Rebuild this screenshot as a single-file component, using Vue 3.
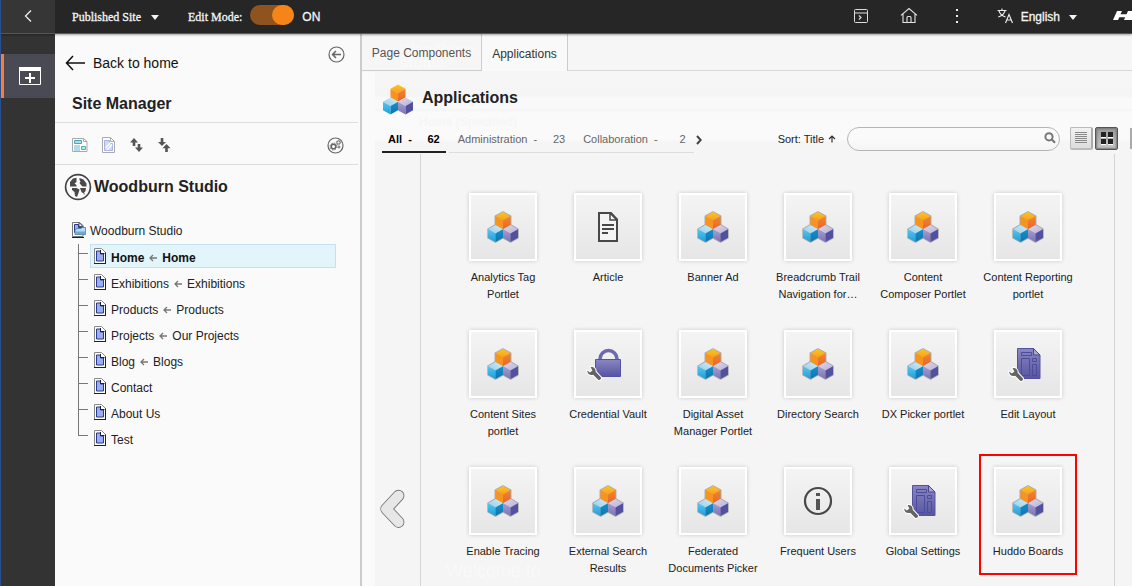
<script setup>
const pages = [
  { name: 'Home', target: 'Home', active: true },
  { name: 'Exhibitions', target: 'Exhibitions' },
  { name: 'Products', target: 'Products' },
  { name: 'Projects', target: 'Our Projects' },
  { name: 'Blog', target: 'Blogs' },
  { name: 'Contact' },
  { name: 'About Us' },
  { name: 'Test' },
]

const apps = [
  { lines: ['Analytics Tag', 'Portlet'], icon: 'cubes' },
  { lines: ['Article'], icon: 'article' },
  { lines: ['Banner Ad'], icon: 'cubes' },
  { lines: ['Breadcrumb Trail', 'Navigation for…'], icon: 'cubes' },
  { lines: ['Content', 'Composer Portlet'], icon: 'cubes' },
  { lines: ['Content Reporting', 'portlet'], icon: 'cubes' },
  { lines: ['Content Sites', 'portlet'], icon: 'cubes' },
  { lines: ['Credential Vault'], icon: 'lock' },
  { lines: ['Digital Asset', 'Manager Portlet'], icon: 'cubes' },
  { lines: ['Directory Search'], icon: 'cubes' },
  { lines: ['DX Picker portlet'], icon: 'cubes' },
  { lines: ['Edit Layout'], icon: 'layout' },
  { lines: ['Enable Tracing'], icon: 'cubes' },
  { lines: ['External Search', 'Results'], icon: 'cubes' },
  { lines: ['Federated', 'Documents Picker'], icon: 'cubes' },
  { lines: ['Frequent Users'], icon: 'info' },
  { lines: ['Global Settings'], icon: 'layout' },
  { lines: ['Huddo Boards'], icon: 'cubes', marked: true },
]
</script>

<template>
  <div class="page">
    <svg class="defs" width="0" height="0">
      <defs>
        <linearGradient id="oTop" x1="0" y1="0" x2="0" y2="1"><stop offset="0" stop-color="#ffc61e" /><stop offset="1" stop-color="#f99d1c" /></linearGradient>
        <linearGradient id="oRight" x1="0" y1="0" x2="0" y2="1"><stop offset="0" stop-color="#f1872c" /><stop offset="1" stop-color="#e9642b" /></linearGradient>
        <linearGradient id="bTop" x1="1" y1="0" x2="0" y2="1"><stop offset="0" stop-color="#d5eaf6" /><stop offset="1" stop-color="#8fd0ef" /></linearGradient>
        <linearGradient id="bLeft" x1="0" y1="0" x2="0" y2="1"><stop offset="0" stop-color="#5cc3ee" /><stop offset="1" stop-color="#1a9fdb" /></linearGradient>
        <linearGradient id="bRight" x1="0" y1="0" x2="0" y2="1"><stop offset="0" stop-color="#1590cb" /><stop offset="1" stop-color="#0d75b0" /></linearGradient>
        <linearGradient id="pTop" x1="0" y1="0" x2="1" y2="1"><stop offset="0" stop-color="#ddd8ec" /><stop offset="1" stop-color="#b9b0d8" /></linearGradient>
        <linearGradient id="pLeft" x1="0" y1="0" x2="0" y2="1"><stop offset="0" stop-color="#a79dce" /><stop offset="1" stop-color="#7a74b8" /></linearGradient>
        <linearGradient id="violet" x1="0" y1="0" x2="0" y2="1"><stop offset="0" stop-color="#8a86c2" /><stop offset="1" stop-color="#5655a0" /></linearGradient>
        <symbol id="cubes" viewBox="0 0 32 32">
          <path fill="url(#oTop)" d="M16 1l7.500 4.200L16 9.600 8.500 5.200z" />
          <path fill="#f79420" d="M8.500 5.200L16 9.600v8.700l-7.500-4.200z" />
          <path fill="url(#oRight)" d="M23.500 5.200L16 9.600v8.700l7.500-4.200z" />
          <path fill="url(#bTop)" d="M8.500 14.100L16 18.300l-7.500 4.300L1 18.300z" />
          <path fill="url(#bLeft)" d="M1 18.300l7.500 4.300V31L1 26.800z" />
          <path fill="url(#bRight)" d="M16 18.300l-7.500 4.300V31l7.500-4.200z" />
          <path fill="url(#pTop)" d="M23.500 14.100l7.500 4.200-7.500 4.300-7.500-4.300z" />
          <path fill="url(#pLeft)" d="M16 18.300l7.500 4.300V31L16 26.800z" />
          <path fill="#5250a0" d="M31 18.300l-7.500 4.300V31l7.500-4.200z" />
        </symbol>
        <symbol id="wrench" viewBox="0 0 16 16">
          <path fill="#646464" stroke="#fff" stroke-width="2" paint-order="stroke" stroke-linejoin="round" d="M4.600 1.200C7.300.6 10 2.500 9.600 5.700L14.800 11.200c1.100 1.300-1.200 3.700-2.600 2.500L7.200 8.800C4.300 9.900 1.100 8 1.200 4.600l2.700 2 2.500-2.200z" />
        </symbol>
      </defs>
    </svg>

    <header class="topbar">
      <div class="collapse">
        <svg width="10" height="14" viewBox="0 0 10 14"><path d="M8 1.500L2.500 7 8 12.500" fill="none" stroke="#eee" stroke-width="1.300" /></svg>
      </div>
      <span class="serif">Published Site</span>
      <i class="caret site-caret"></i>
      <span class="serif mode">Edit Mode:</span>
      <span class="toggle"><i></i></span>
      <span class="on">ON</span>
      <span class="spacer"></span>
      <svg class="ic-preview" width="16" height="16" viewBox="0 0 16 16" fill="none" stroke="#ddd"><rect x="1.500" y="1.500" width="13" height="13" rx="1" /><path d="M1.500 5h13M6 7.500l2 2-2 2" stroke-width="1.200" /></svg>
      <svg class="ic-home" width="18" height="17" viewBox="0 0 18 17" fill="none" stroke="#e4e4e4" stroke-width="1.100"><path d="M1 8.300L9 1.500l8 6.800M3 7v8.500h12V7M7 15.500V10.500q0-1 1-1h2q1 0 1 1v5" /></svg>
      <svg class="ic-more" width="4" height="14" viewBox="0 0 4 14" fill="#eee"><path d="M1 0h2v2H1zM1 6h2v2H1zM1 12h2v2H1z" /></svg>
      <svg class="ic-lang" width="17" height="16" viewBox="0 0 17 16" fill="none" stroke="#eee" stroke-width="1.100"><path d="M.5 2.500h9M5 .5v2M2 3q1.500 4.500 6.500 6M8 3Q6.500 7.500 1.300 9M8.500 15l3.500-8.500 3.500 8.500M9.700 12h4.600" /></svg>
      <span class="lang">English</span>
      <i class="caret"></i>
      <svg class="brand" width="20" height="10" viewBox="0 0 20 10" fill="#fff"><path d="M4 0h5L7.500 3.300h6L15 0h5v9h-9l1.200-2.800H6.300L5 9H0z" /></svg>
    </header>

    <div class="body">
      <nav class="rail">
        <div class="rail-item">
          <svg width="22" height="18" viewBox="0 0 22 18"><path d="M.5.500h21v17H.5z" fill="none" stroke="#fff" /><path d="M0 0h22v4H0zM6 10h10v2H6zM10 6h2v10h-2z" fill="#fff" /></svg>
        </div>
      </nav>

      <aside class="sidebar">
        <div class="back">
          <svg width="20" height="16" viewBox="0 0 20 16" fill="none" stroke="#111" stroke-width="1.500"><path d="M20 8H1.500M8 1L1.500 8 8 15" /></svg>
          <span>Back to home</span>
          <svg class="close" width="17" height="17" viewBox="0 0 17 17" fill="none" stroke="#666"><circle cx="8.500" cy="8.500" r="7.500" stroke-width="1.200" /><path d="M13 8.500H5M8 5L4.500 8.500 8 12" stroke-width="1.500" /></svg>
        </div>
        <h2 class="side-title">Site Manager</h2>
        <div class="tools">
          <svg width="16" height="16" viewBox="0 0 16 16"><path d="M.5 1.500h11l3.500 3v10H.5z" fill="#fff" stroke="#aaa" /><path d="M11.500 1.500v3H15" fill="none" stroke="#aaa" /><path d="M2.500 3.500h7v3h-7z" fill="#a9e0ea" stroke="#4aa6b8" /><path d="M2 9h6M2 11h6M2 13h6" stroke="#63b9c8" /><path d="M9.500 9.500h4v3h-4z" fill="#b6e5ed" stroke="#55afc0" /></svg>
          <svg width="13" height="16" viewBox="0 0 13 16"><path d="M.5.500h8l4 4v11H.5z" fill="#fff" stroke="#aaa" /><path d="M8.500.500v4h4" fill="none" stroke="#aaa" /><path d="M2.500 3.500h5v3h3v7h-8z" fill="#cfd8fb" stroke="#a5b4e5" /><path d="M3.500 11l5-5.500M5 13l5-5.500" stroke="#fff" stroke-width="1.300" /></svg>
          <svg width="13" height="16" viewBox="0 0 13 16" fill="#555"><path d="M4 1l4 4.500H5.300V9H2.700V5.500H0zM9 15l-4-4.500h2.700V7h2.600v3.500H13z" /></svg>
          <svg width="13" height="16" viewBox="0 0 13 16" fill="#555"><path d="M4 9L0 5h2.700V1h2.600v4H8zM8.500 7l4 4.300H9.800V15H7.200v-3.700H4.500z" /></svg>
          <svg class="gear" width="17" height="17" viewBox="0 0 17 17" fill="none" stroke="#666"><circle cx="8.500" cy="8.500" r="7.500" stroke-width="1.200" /><circle cx="6.500" cy="9.500" r="2.300" stroke-width="1.500" /><circle cx="6.500" cy="9.500" r="3.400" stroke-dasharray="1.500 1.170" /><circle cx="11.500" cy="5.500" r="1.500" /><circle cx="11.500" cy="5.500" r="2.200" stroke-dasharray="1 .73" stroke-width=".8" /><circle cx="12" cy="10" r="1" /></svg>
        </div>
        <div class="site">
          <svg width="28" height="28" viewBox="0 0 28 28"><circle cx="14" cy="14" r="12.400" fill="#fafafa" stroke="#444" stroke-width="1.700" /><path fill="#4a4a4a" d="M6 9l3-3.500 3.500-.7V9l-2 1.500 2 1.500v1.500H6zM15.500 5l4 1.500 3 4v3h-4L17 12l-1.500-2 1-1.500-1-1.500zM8 15h4.500l3 1.500-1 3.500-1.500 4-2-1-.5-4L8 17zM16 15h6l-.5 3-2 2.500-2-1.500zM19.500 21l1.300-1-.5 2z" /></svg>
          <h2>Woodburn Studio</h2>
        </div>
        <div class="root">
          <svg width="14" height="16" viewBox="0 0 14 16"><path d="M.5.500h7l3.500 3v11H.5z" fill="#fff" stroke="#777" /><path d="M2.500 2.500h4v3h4v5h-8z" fill="#99aefa" stroke="#2b3a87" /><path d="M7 .5L11 4.500H7z" fill="#fff" stroke="#223355" stroke-width=".8" /><path d="M0 15.500h12" stroke="#222" /><path d="M3 8l2-1.500h4l1-1h3.500V12.500H3z" fill="#b6daf0" stroke="#4e7898" stroke-width=".8" /><path d="M3.300 9.500h10v2.700h-10z" fill="#67acd8" /></svg>
          <span>Woodburn Studio</span>
        </div>
        <ul class="tree">
          <li v-for="p in pages" :key="p.name" :class="{ active: p.active }">
            <svg class="doc" width="12" height="16" viewBox="0 0 12 16"><path d="M.5 15V.500h7l4 4V15" fill="#fff" stroke="#888" /><path d="M0 15.500h12M11.500 4.500V15" fill="none" stroke="#222" /><path d="M2.500 3h4v3h3v7h-7z" fill="#99aefa" stroke="#2b3a87" /><path d="M6.500 2v3.500H10.500" fill="none" stroke="#223" /></svg>
            <span>{{ p.name }}</span>
            <template v-if="p.target">
              <svg class="maps" width="8" height="8" viewBox="0 0 8 8"><path d="M8 4H1.500M4 1L1 4l3 3" fill="none" stroke="#777" stroke-width="1.300" /></svg>
              <span>{{ p.target }}</span>
            </template>
          </li>
        </ul>
      </aside>

      <main class="content">
        <span class="ghost ghost-studio">Woodburn<br>studio</span>
        <span class="ghost ghost-home">Home (Specified)</span>
        <span class="ghost ghost-welcome">Welcome to</span>
        <div class="tabs">
          <div class="tab first">Page Components</div>
          <div class="tab current">Applications</div>
          <div class="tab-rest"></div>
        </div>
        <div class="heading">
          <svg width="32" height="33"><use href="#cubes" /></svg>
          <h1>Applications</h1>
        </div>
        <div class="filters">
          <div class="filter all"><span>All &nbsp;-</span><span>62</span></div>
          <div class="filter admin"><span>Administration &nbsp;-</span><span>23</span></div>
          <div class="filter collab"><span>Collaboration &nbsp;-</span><span>2</span></div>
          <svg class="next" width="6" height="10" viewBox="0 0 6 10"><path d="M1 1l3.700 4L1 9" fill="none" stroke="#444" stroke-width="2" /></svg>
          <span class="sort">Sort: Title</span>
          <svg class="sort-arrow" width="8" height="8" viewBox="0 0 8 8"><path d="M4 7.500V1M1 4l3-3 3 3" fill="none" stroke="#333" stroke-width="1.200" /></svg>
          <div class="search">
            <svg width="12" height="12" viewBox="0 0 12 12" fill="none" stroke="#777"><circle cx="5" cy="4.800" r="3.600" stroke-width="2" /><path d="M7.700 7.500L11 10.700" stroke-width="2.200" /></svg>
          </div>
          <button class="view list"><svg width="12" height="12" viewBox="0 0 12 12"><path d="M0 .5h12M0 2.500h12M0 4.500h12M0 6.500h12M0 8.500h12M0 10.500h12" stroke="#888" stroke-width="1" /></svg></button>
          <button class="view grid-on"><svg width="12" height="13" viewBox="0 0 12 13"><path d="M0 0h5v5H0zM7 0h5v5H7zM0 7h5v5H0zM7 7h5v5H7z" fill="#222" /><path d="M0 5.500h5M7 5.500h5M0 12.500h5M7 12.500h5" stroke="#fff" stroke-width="1" /></svg></button>
          <i class="edge"></i>
        </div>
        <div class="gallery">
          <div class="prev">
            <svg width="28" height="42" viewBox="0 0 28 42" stroke-linecap="round" stroke-linejoin="round" fill="none"><path d="M19.500 7.700L7.200 21l12.300 13" stroke="#777" stroke-width="11.800" /><path d="M19.500 7.700L7.200 21l12.300 13" stroke="#e7e7e7" stroke-width="10" /></svg>
          </div>
          <div class="apps">
            <div v-for="a in apps" :key="a.lines[0]" class="app" :class="{ marked: a.marked }">
              <div class="tile">
                <svg v-if="a.icon === 'cubes'" width="34" height="34" viewBox="0 0 34 34"><path d="M17 2l7.700 4.200v8.600l7.300 4.400v8.600L24.500 32 17 27.800 9.500 32 2 27.800v-8.600l7.300-4.400V6.200z" fill="#aaa" stroke="#aaa" stroke-width="1.500" stroke-linejoin="round" /><use href="#cubes" x="1" y="1" width="32" height="32" /></svg>
                <svg v-else-if="a.icon === 'article'" width="22" height="32" viewBox="0 0 22 32"><path d="M2 2h12l6 6.500V30H2z" fill="#f4f4f4" stroke="#484848" stroke-width="2" /><path d="M13 1.500v7.500h7.500M13 2l7 7" fill="none" stroke="#484848" stroke-width="1.500" /><path d="M5 14h12M5 18h12M5 22h6" stroke="#484848" stroke-width="2" /></svg>
                <svg v-else-if="a.icon === 'info'" width="30" height="30" viewBox="0 0 30 30"><circle cx="15" cy="15" r="13" fill="none" stroke="#484848" stroke-width="2.200" /><path d="M13 7h4v3h-4zM13 13h4v11h-4z" fill="#555" /></svg>
                <svg v-else width="44" height="44" viewBox="0 0 44 44">
                  <template v-if="a.icon === 'lock'">
                    <path d="M14 18.500V17a8.500 8.500 0 0 1 17 0v1.500" fill="none" stroke="#6c69b0" stroke-width="3.500" />
                    <path d="M9.500 17.500h25v17h-25z" fill="url(#violet)" stroke="#5552a2" />
                    <use href="#wrench" x="0" y="24" width="16" height="16" />
                  </template>
                  <template v-else>
                    <path d="M11.500 6.500h16l6.500 6.500v23.500H11.500z" fill="url(#violet)" stroke="#5552a2" />
                    <path d="M27.500 6.500v6.500H34z" fill="#aaa6d4" stroke="#49478f" />
                    <path d="M15.500 10.500h10v3h-10zM15.500 16.500h8v17h-8zM26.500 16.500h4v3h-4zM26.500 22.500h4v11h-4z" fill="none" stroke="#4d4b9c" />
                    <use href="#wrench" x="2" y="25" width="16" height="16" />
                  </template>
                </svg>
              </div>
              <div class="label"><div v-for="l in a.lines" :key="l">{{ l }}</div></div>
            </div>
          </div>
          <div class="right-gap"></div>
        </div>
      </main>
    </div>
  </div>
</template>

<style>
body { background: #f5f5f5; overflow: hidden; }
</style>

<style scoped>
* { box-sizing: border-box; }
svg { display: block; flex: none; }
h1, h2 { margin: 0; font-size: 16px; font-weight: bold; line-height: 20px; color: #222; }
.defs { position: absolute; }
.page { width: 1132px; height: 586px; overflow: hidden; border-left: 1px solid #2a4f8c; font-family: "Liberation Sans", Arial, sans-serif; font-size: 12px; color: #222; display: flex; flex-direction: column; }
.topbar { height: 34px; flex: none; background: #262626; border-bottom: 1px solid #5a5757; display: flex; align-items: center; color: #f4f4f4; position: relative; z-index: 2; box-shadow: 0 1px 2px rgba(0, 0, 0, .35); white-space: nowrap; }
.collapse { width: 54px; height: 33px; background: #363636; display: flex; align-items: center; justify-content: center; padding-bottom: 1px; }
.serif { font-family: "Liberation Serif", "Times New Roman", serif; margin-left: 17px; padding-top: 1px; -webkit-text-stroke: .3px #f4f4f4; }
.caret { border: 4px solid transparent; border-top: 5px solid #f4f4f4; border-bottom: 0; margin-top: 1px; }
.site-caret { margin-left: 10px; }
.serif.mode { margin-left: 29px; }
.toggle { width: 44px; height: 20px; border-radius: 10px; background: #8f5320; margin: -3px 0 0 8px; display: flex; justify-content: flex-end; }
.toggle i { width: 22px; height: 20px; border-radius: 10px; background: #f58519; }
.on, .lang { -webkit-text-stroke: .3px #f4f4f4; }
.on { margin-left: 8px; }
.spacer { flex: 1; }
.ic-preview { margin-right: 31px; margin-top: -1px; }
.ic-home { margin-right: 37px; margin-top: -2px; }
.ic-more { margin-right: 38px; margin-top: -1px; }
.ic-lang { margin-right: 7px; margin-top: -1px; }
.lang { margin-right: 9px; }
.brand { margin-left: 36px; margin-top: -2px; margin-right: -1px; }
.body { flex: 1; min-height: 0; display: flex; }
.rail { width: 54px; flex: none; background: #333; padding-top: 20px; }
.rail-item { height: 44px; background: #4a4a54; border-left: 3px solid #ff7a33; display: flex; align-items: center; padding-left: 15px; }
.sidebar { width: 307px; flex: none; background: #fafafa; border-right: 2px solid #ccc; }
.back { height: 58px; display: flex; align-items: center; padding-left: 10px; font-size: 14px; color: #111; }
.back span { margin-left: 8px; }
.back .close { margin: -18px 15px 0 auto; }
.side-title { padding: 1px 0 0 17px; height: 30px; line-height: 22px; }
.tools { height: 43px; border: solid #ddd; border-width: 1px 0; margin-right: 2px; display: flex; align-items: center; padding: 3px 14px 0 17px; }
.tools svg { margin-right: 15px; }
.tools .gear { margin: 0 0 0 auto; }
.tools svg:first-child { margin-right: 14px; }
.site { display: flex; align-items: center; height: 44px; padding-left: 9px; }
.site h2 { margin-left: 2px; }
.root { display: flex; align-items: center; height: 18px; margin-top: 12px; padding-left: 17px; }
.root svg { margin-top: -1px; }
.root span { margin-left: 4px; padding-top: 2px; }
.tree { list-style: none; margin: 5px 0 0 23px; padding: 0; }
.tree li { height: 26px; display: flex; align-items: center; padding-left: 16px; position: relative; }
.tree li::before { content: ""; position: absolute; left: 0; top: 0; height: 26px; width: 0; border-left: 1px solid #777; }
.tree li::after { content: ""; position: absolute; left: 0; top: 9px; width: 10px; border-top: 1px solid #777; }
.tree li:last-child::before { height: 9px; }
.tree span { padding-top: 1px; }
.doc { margin-right: 5px; margin-top: -2px; }
.maps { margin: 2px 5px 0; }
.tree .active { font-weight: bold; color: #111; }
.tree li.active { background: linear-gradient(#e2f5fa, #e2f5fa) 13px 1px / 244px 22px no-repeat, linear-gradient(#c4e2ea, #c4e2ea) 12px 0 / 246px 24px no-repeat; }
.content { flex: 1; min-width: 0; position: relative; z-index: 0; display: flex; flex-direction: column; background: linear-gradient(#fafafa, #fafafa) 0 38px / 13px 600px no-repeat, linear-gradient(#f6f6f6 0 38px, #f5f5f5 60px 62px, #f9f9f9 64px 74px, #f6f6f6 75px 77px, #fafafa 78px 105px, #f5f5f5 108px); }
.ghost { position: absolute; z-index: -1; color: #f9f9f9; white-space: nowrap; }
.ghost-studio { left: 38px; top: 8px; font: bold 15px/14px "Liberation Sans", sans-serif; }
.ghost-home { left: 57px; top: 79px; font: bold 12px/18px "Liberation Sans", sans-serif; color: #f6f6f6; }
.ghost-welcome { left: 84px; top: 526px; font: 18px/22px "Liberation Sans", sans-serif; }
.tabs { height: 37px; display: flex; }
.tab { padding-top: 12px; text-align: center; border-right: 1px solid #ccc; }
.tab.first { width: 120px; border-bottom: 1px solid #ccc; color: #555; }
.tab.current { width: 86px; padding-top: 13px; background: #f9f9f9; color: #333; }
.tab-rest { flex: 1; border-bottom: 1px solid #d8d8d8; }
.heading { height: 49px; padding: 12px 0 0 20px; display: flex; }
.heading h1 { margin: 5px 0 0 8px; }
.filters { height: 34px; display: flex; align-items: center; padding-left: 20px; font-size: 11px; white-space: nowrap; }
.filter { height: 33px; display: flex; justify-content: space-between; align-items: center; padding: 6px 6px 0; color: #666; border-bottom: 1px solid #ddd; align-self: flex-start; }
.filter.all { width: 64px; font-weight: bold; color: #000; border-bottom: 2px solid #222; padding-top: 7px; }
.filter.admin { margin-left: 3px; width: 123px; padding-left: 9px; padding-right: 6px; }
.filter.collab { width: 123px; padding-left: 12px; padding-right: 8px; }
.next { margin-left: 2px; margin-top: 5px; }
.sort { margin-left: 76px; margin-top: 4px; }
.sort-arrow { margin: 3px 0 0 4px; }
.search { margin-left: 11px; margin-top: 4px; width: 214px; height: 24px; border: 1px solid #b5b5b5; border-radius: 12px; background: linear-gradient(#fafafa 50%, #f5f5f5); display: flex; align-items: center; justify-content: flex-end; padding: 0 3px 3px 0; }
.view { width: 23px; height: 23px; padding: 0; border: 1px solid #bbb; border-radius: 2px; margin: 3px 0 0 10px; background: linear-gradient(#f2f2f2, #ddd); display: flex; align-items: center; justify-content: center; flex: none; }
.view.list { border-right: 2px solid #aaa; border-bottom: 2px solid #bbb; }
.view.grid-on { margin-left: 2px; border: 1px solid #555; background: linear-gradient(#999, #c8c8c8); box-shadow: inset 0 0 2px 1px #777; }
.edge { width: 2px; height: 21px; background: #aaa; margin: 3px 0 0 12px; flex: none; }
.gallery { flex: 1; min-height: 0; display: flex; }
.prev { width: 59px; border-right: 1px solid #d4d4d4; padding: 334px 0 0 17px; }
.apps { width: 694px; border-right: 1px solid #d4d4d4; padding: 39px 0 0 29px; display: grid; grid-template-columns: repeat(6, 105px); grid-auto-rows: 137px; }
.app { display: flex; flex-direction: column; align-items: center; font-size: 11px; line-height: 17px; text-align: center; position: relative; white-space: nowrap; }
.tile { width: 68px; height: 68px; border: 2px solid #fff; background: linear-gradient(#f4f4f4, #e6e6e6); box-shadow: 0 0 4px rgba(0, 0, 0, .18); display: flex; align-items: center; justify-content: center; }
.label { margin-top: 8px; padding-left: 1px; }
.marked::after { content: ""; position: absolute; left: 4px; top: -13px; width: 94px; height: 117px; border: 2px solid #f00; }
.right-gap { flex: 1; }
</style>
